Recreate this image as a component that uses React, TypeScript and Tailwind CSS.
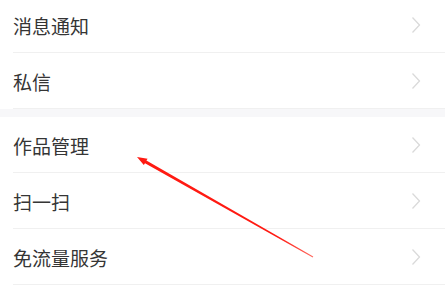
const groups = [['消息通知', '私信'], ['作品管理', '扫一扫', '免流量服务']]

function Row({ label }: { label: string }) {
  return (
    <div className="h-[56px] flex items-center justify-between pl-[13px] pr-[24px] relative">
      <span className="text-[19px] text-[#353535] leading-none">{label}</span>
      <svg width="10" height="18" viewBox="0 0 10 18" className="text-[#dadada]">
        <path d="M1.5 1.5 L8.5 9 L1.5 16.5" fill="none" stroke="currentColor" strokeWidth="1.3" />
      </svg>
      <div className="absolute left-[13px] right-0 bottom-0 h-px bg-[#f0f0f0]" />
    </div>
  )
}

export default function App() {
  return (
    <div
      className="relative w-[445px] h-[295px] overflow-hidden bg-white"
      style={{ fontFamily: '"Noto Sans CJK SC", "Noto Sans", sans-serif' }}
    >
      <div className="-mt-[3px]">
        {groups[0].map((l) => (
          <Row key={l} label={l} />
        ))}
      </div>
      <div className="h-[8px] bg-[#f7f7f9]" />
      <div>
        {groups[1].map((l) => (
          <Row key={l} label={l} />
        ))}
      </div>

      {/* annotation arrow */}
      <svg className="absolute inset-0 pointer-events-none" width="445" height="295">
        <defs>
          <linearGradient id="fade" x1="137" y1="157" x2="313" y2="257" gradientUnits="userSpaceOnUse">
            <stop offset="0" stopColor="#ff1a12" />
            <stop offset="0.8" stopColor="#ff1a12" />
            <stop offset="1" stopColor="#ff6a60" />
          </linearGradient>
        </defs>
        <polygon
          fill="url(#fade)"
          points="137,157 147.6,158.7 146.4,160.6 313.25,256.6 312.75,257.4 145,163.2 143.8,165.1"
        />
      </svg>
    </div>
  )
}
